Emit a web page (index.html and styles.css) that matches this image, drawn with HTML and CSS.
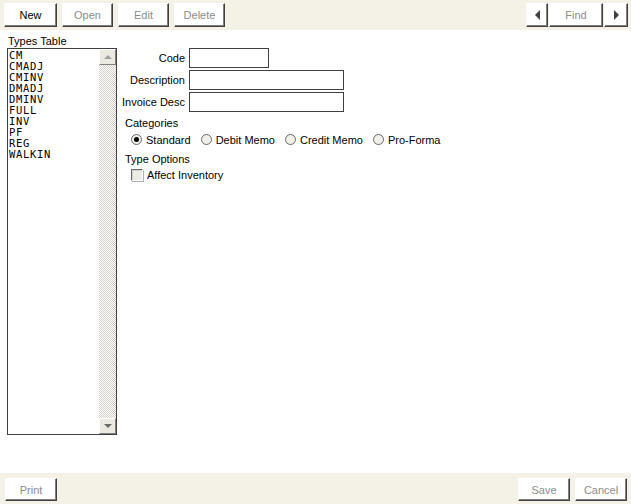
FILE: index.html
```html
<!DOCTYPE html>
<html lang="en">
<head>
    <meta charset="UTF-8">
    <title>Invoice Types</title>
    <link rel="stylesheet" href="styles.css">
</head>
<body>
    <div class="toolbar">
        <div class="btn-group">
            <button class="btn">New</button>
            <button class="btn" disabled>Open</button>
            <button class="btn" disabled>Edit</button>
            <button class="btn" disabled>Delete</button>
        </div>
        <div class="nav-group">
            <button class="btn btn-arrow"><span class="tri tri-left"></span></button>
            <button class="btn btn-find" disabled>Find</button>
            <button class="btn btn-arrow next"><span class="tri tri-right"></span></button>
        </div>
    </div>

    <div class="main">
        <!-- types list -->
        <div class="left-pane">
            <div class="pane-label">Types Table</div>
            <div class="listbox">
                <ul class="list-items">
                    <li>CM</li>
                    <li>CMADJ</li>
                    <li>CMINV</li>
                    <li>DMADJ</li>
                    <li>DMINV</li>
                    <li>FULL</li>
                    <li>INV</li>
                    <li>PF</li>
                    <li>REG</li>
                    <li>WALKIN</li>
                </ul>
                <div class="scrollbar">
                    <div class="scroll-btn"><span class="tri tri-up"></span></div>
                    <div class="scroll-track"></div>
                    <div class="scroll-btn"><span class="tri tri-down"></span></div>
                </div>
            </div>
        </div>

        <!-- edit form -->
        <div class="form">
            <div class="field-row">
                <label class="field-label">Code</label>
                <input class="field-input short" type="text">
            </div>
            <div class="field-row">
                <label class="field-label">Description</label>
                <input class="field-input" type="text">
            </div>
            <div class="field-row">
                <label class="field-label">Invoice Desc</label>
                <input class="field-input" type="text">
            </div>

            <div class="group-title">Categories</div>
            <div class="radio-row">
                <span class="radio checked"></span><span class="opt-text">Standard</span>
                <span class="radio"></span><span class="opt-text">Debit Memo</span>
                <span class="radio"></span><span class="opt-text">Credit Memo</span>
                <span class="radio"></span><span class="opt-text">Pro-Forma</span>
            </div>

            <div class="group-title options-title">Type Options</div>
            <div class="check-row">
                <span class="checkbox"></span><span class="opt-text">Affect Inventory</span>
            </div>
        </div>
    </div>

    <div class="bottombar">
        <button class="btn" disabled>Print</button>
        <div class="btn-group">
            <button class="btn" disabled>Save</button>
            <button class="btn" disabled>Cancel</button>
        </div>
    </div>
</body>
</html>
```

FILE: styles.css
```css
/* 기본 */
body {
    font-family: "Liberation Sans", Arial, sans-serif;
    font-size: 11px;
    color: #000;
    background: #fff;
    margin: 0;
    width: 631px;
    height: 504px;
    display: flex;
    flex-direction: column;
    overflow: hidden;
}

/* 상단 툴바 */
.toolbar {
    height: 30px;
    background: #f4f1e6;
    display: flex;
    justify-content: space-between;
    align-items: flex-start;
    padding: 3px 3px 0 4px;
    box-sizing: border-box;
}

.btn-group {
    display: flex;
    gap: 5px;
}

.nav-group {
    display: flex;
    gap: 1px;
}

/* 버튼 */
.btn {
    font-family: "Liberation Sans", Arial, sans-serif;
    font-size: 11px;
    height: 24px;
    width: 51px;
    padding: 0;
    background: #fff;
    color: #000;
    border: 1px solid;
    border-color: #fff #404040 #404040 #fff;
    box-shadow: inset -1px -1px #808080;
    display: flex;
    align-items: center;
    justify-content: center;
}

.toolbar .btn-group .btn:first-child {
    width: 53px;
}

.btn:disabled {
    color: #8c8c8c;
}

.btn-arrow {
    width: 22px;
}

.btn-arrow.next {
    width: 24px;
}

.btn-find {
    width: 54px;
}

/* 삼각형 */
.tri {
    width: 0;
    height: 0;
    border-style: solid;
    display: block;
}

.tri-left {
    border-width: 5px 5px 5px 0;
    border-color: transparent #404040 transparent transparent;
}

.tri-right {
    border-width: 5px 0 5px 5px;
    border-color: transparent transparent transparent #404040;
}

.tri-up {
    border-width: 0 4px 4px 4px;
    border-color: transparent transparent #a0a0a0 transparent;
}

.tri-down {
    border-width: 4px 4px 0 4px;
    border-color: #6a6a6a transparent transparent transparent;
}

/* 본문 */
.main {
    flex: 1;
    display: flex;
}

.left-pane {
    padding: 5px 0 0 7px;
    width: 110px;
}

.pane-label {
    height: 13px;
    line-height: 13px;
    padding-left: 1px;
}

.listbox {
    width: 110px;
    height: 387px;
    border: 1px solid #404040;
    box-sizing: border-box;
    display: flex;
}

.list-items {
    flex: 1;
    list-style: none;
    margin: 0;
    padding: 1px 0 0 1px;
    font-family: "DejaVu Sans Mono", "Liberation Mono", monospace;
    font-size: 10.5px;
    letter-spacing: 0.7px;
    line-height: 11px;
}

/* 스크롤바 */
.scrollbar {
    width: 17px;
    display: flex;
    flex-direction: column;
}

.scroll-track {
    flex: 1;
    background: repeating-conic-gradient(#fff 0 25%, #d4d0c8 0 50%) 0 0 / 2px 2px;
}

.scroll-btn {
    height: 16px;
    background: #ece9e0;
    border: 1px solid;
    border-color: #fff #808080 #808080 #fff;
    box-sizing: border-box;
    display: flex;
    align-items: center;
    justify-content: center;
}

/* 폼 */
.form {
    padding: 18px 0 0 4px;
}

.field-row {
    display: flex;
    align-items: center;
    gap: 4px;
    margin-bottom: 2px;
}

.field-label {
    width: 64px;
    text-align: right;
}

.field-input {
    width: 155px;
    height: 20px;
    box-sizing: border-box;
    border: 1px solid #404040;
    padding: 0 2px;
    margin: 0;
}

.field-input.short {
    width: 80px;
}

.group-title {
    margin: 5px 0 0 4px;
    line-height: 13px;
}

.radio-row,
.check-row {
    display: flex;
    align-items: center;
    padding-left: 10px;
    height: 17px;
    margin-top: 1px;
}

.opt-text {
    margin-left: 4px;
    margin-right: 10px;
}

.radio {
    width: 9px;
    height: 9px;
    border: 1px solid #6a6a6a;
    border-radius: 50%;
    background: #f0efe8;
    position: relative;
}

.radio.checked::after {
    content: "";
    position: absolute;
    left: 2px;
    top: 2px;
    width: 5px;
    height: 5px;
    border-radius: 50%;
    background: #000;
}

.options-title {
    margin-top: 5px;
}

.check-row {
    margin-top: 0;
}

.checkbox {
    width: 10px;
    height: 10px;
    border: 1px solid;
    border-color: #6a6a6a #fff #fff #6a6a6a;
    box-shadow: 1px 1px 0 #b0b0b0, inset 1px 1px #d0d0d0;
    background: #ecebe4;
}

/* 하단 바 */
.bottombar {
    height: 31px;
    background: #f4f1e6;
    display: flex;
    justify-content: space-between;
    align-items: flex-start;
    padding: 5px 4px 0 5px;
    box-sizing: border-box;
}

.bottombar .btn {
    height: 23px;
    width: 52px;
}
```
